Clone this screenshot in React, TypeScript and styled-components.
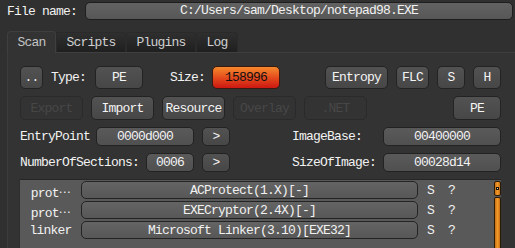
import React from "react";
import styled, { createGlobalStyle } from "styled-components";

const GlobalStyle = createGlobalStyle`
  html, body {
    margin: 0;
    padding: 0;
    background: #303030;
    overflow: hidden;
  }
  body {
    font-family: "Liberation Mono", "DejaVu Sans Mono", monospace;
    font-size: 13px;
    letter-spacing: -0.8px;
    color: #f2f2f2;
  }
`;

const Page = styled.div`
  width: 515px;
  height: 248px;
  overflow: hidden;
  display: flex;
  flex-direction: column;
`;

const FileRow = styled.div`
  display: flex;
  align-items: center;
  gap: 8px;
  height: 18px;
  margin: 2px 2px 0 7px;
`;

const FileInput = styled.div`
  flex: 1;
  height: 16px;
  line-height: 16px;
  text-align: center;
  background: linear-gradient(#626262, #575757);
  border: 1px solid #1e1e1e;
  border-radius: 5px;
`;

const TabBar = styled.div`
  display: flex;
  align-items: flex-end;
  height: 22px;
  margin: 10px 0 0 7px;
  position: relative;
  z-index: 1;
`;

const Tab = styled.div<{ $w: number; $active?: boolean }>`
  width: ${p => p.$w}px;
  height: ${p => (p.$active ? 22 : 20)}px;
  line-height: ${p => (p.$active ? 22 : 20)}px;
  box-sizing: border-box;
  text-align: center;
  color: ${p => (p.$active ? "#c4c4c4" : "#d0d0d0")};
  background: ${p => (p.$active ? "#333333" : "linear-gradient(#2f2f2f, #1f1f1f)")};
  border: 1px solid ${p => (p.$active ? "#3f3f3f" : "#2a2a2a")};
  border-bottom: none;
  border-radius: ${p => (p.$active ? "4px 4px 0 0" : "0 4px 0 0")};
  margin-bottom: ${p => (p.$active ? -1 : 0)}px;
`;

const Panel = styled.div`
  flex: 1;
  margin-left: 7px;
  background: #333333;
  border-left: 1px solid #3c3c3c;
  border-top: 1px solid #3f3f3f;
  padding: 13px 14px 0 12px;
  display: flex;
  flex-direction: column;
  gap: 7px;
  min-height: 0;
`;

const Row = styled.div<{ $h: number }>`
  display: flex;
  align-items: center;
  height: ${p => p.$h}px;
`;

const Spacer = styled.div`
  flex: 1;
`;

const Label = styled.span<{ $ml?: number }>`
  margin-left: ${p => p.$ml || 0}px;
  white-space: nowrap;
`;

const Button = styled.div<{ $w: number; $ml?: number; $disabled?: boolean }>`
  width: ${p => p.$w}px;
  height: 100%;
  box-sizing: border-box;
  margin-left: ${p => p.$ml || 0}px;
  display: flex;
  align-items: center;
  justify-content: center;
  border-radius: 5px;
  border: 1px solid ${p => (p.$disabled ? "#2a2a2a" : "#232323")};
  background: ${p => (p.$disabled ? "#333333" : "linear-gradient(#525252, #474747)")};
  color: ${p => (p.$disabled ? "#474747" : "#f4f4f4")};
`;

const SizeBox = styled.div`
  width: 68px;
  height: 100%;
  box-sizing: border-box;
  margin-left: 7px;
  display: flex;
  align-items: center;
  justify-content: center;
  border-radius: 5px;
  border: 1px solid #3a1a10;
  background: linear-gradient(#f68a2c, #e2461c 55%, #cc1812);
  color: #111111;
`;

const LeftGroup = styled.div`
  width: 210px;
  height: 100%;
  display: flex;
  align-items: center;
`;

const RightGroup = styled.div`
  flex: 1;
  height: 100%;
  margin-left: 62px;
  display: flex;
  align-items: center;
`;

const ValueBox = styled.div<{ $w: number }>`
  width: ${p => p.$w}px;
  height: 100%;
  box-sizing: border-box;
  display: flex;
  align-items: center;
  justify-content: center;
  border-radius: 5px;
  border: 1px solid #222222;
  background: linear-gradient(#5a5a5a, #505050);
`;

const List = styled.div`
  flex: 1;
  display: flex;
  background: #595959;
  border-top: 1px solid #262626;
  border-left: 1px solid #2e2e2e;
  margin-left: -1px;
  min-height: 0;
`;

const ListRows = styled.div`
  flex: 1;
  display: flex;
  flex-direction: column;
  gap: 2px;
  padding-top: 1px;
`;

const ListRow = styled.div`
  display: flex;
  align-items: center;
  height: 18px;
`;

const RowLabel = styled.div`
  width: 61px;
  text-align: center;
  white-space: nowrap;
`;

const Dots = styled.span`
  font-family: "Noto Sans CJK SC", sans-serif;
  letter-spacing: 0;
  font-size: 11px;
  vertical-align: 4px;
`;

const RowBox = styled.div`
  width: 337px;
  height: 100%;
  box-sizing: border-box;
  display: flex;
  align-items: center;
  justify-content: center;
  border-radius: 5px;
  border: 1px solid #242424;
  background: linear-gradient(#646464, #575757);
  white-space: nowrap;
`;

const Flag = styled.span<{ $ml: number }>`
  margin-left: ${p => p.$ml}px;
`;

const Scrollbar = styled.div`
  width: 7px;
  padding-top: 1px;
  display: flex;
  flex-direction: column;
  gap: 1px;
`;

const ScrollHandle = styled.div`
  height: 15px;
  box-sizing: border-box;
  border: 1px solid #2a1a08;
  border-radius: 2px;
  background: linear-gradient(90deg, #c86e12, #f29a2a, #c86e12);
  display: flex;
  align-items: center;
  justify-content: center;
`;

const HandleDot = styled.div`
  width: 1px;
  height: 1px;
  background: #f6d8a0;
  border: 1px solid #111;
`;

const ScrollTrack = styled.div`
  flex: 1;
  box-sizing: border-box;
  border: 1px solid #2a1a08;
  border-bottom: none;
  border-radius: 2px 2px 0 0;
  background: linear-gradient(90deg, #c86e12, #f29a2a, #c86e12);
`;

const rows = [
  { type: "prot", cut: true, name: "ACProtect(1.X)[-]" },
  { type: "prot", cut: true, name: "EXECryptor(2.4X)[-]" },
  { type: "linker", cut: false, name: "Microsoft Linker(3.10)[EXE32]" },
];

export default function App() {
  return (
    <Page>
      <GlobalStyle />
      <FileRow>
        <Label>File name:</Label>
        <FileInput>C:/Users/sam/Desktop/notepad98.EXE</FileInput>
      </FileRow>
      <TabBar>
        <Tab $w={49} $active>Scan</Tab>
        <Tab $w={70}>Scripts</Tab>
        <Tab $w={70}>Plugins</Tab>
        <Tab $w={42}>Log</Tab>
      </TabBar>
      <Panel>
        <Row $h={23}>
          <Button $w={23}>..</Button>
          <Label $ml={8}>Type:</Label>
          <Button $w={48} $ml={9}>PE</Button>
          <Label $ml={27}>Size:</Label>
          <SizeBox>158996</SizeBox>
          <Spacer />
          <Button $w={63}>Entropy</Button>
          <Button $w={33} $ml={8}>FLC</Button>
          <Button $w={28} $ml={8}>S</Button>
          <Button $w={28} $ml={8}>H</Button>
        </Row>
        <Row $h={24}>
          <Button $w={63} $disabled>Export</Button>
          <Button $w={63} $ml={8}>Import</Button>
          <Button $w={63} $ml={8}>Resource</Button>
          <Button $w={63} $ml={8} $disabled>Overlay</Button>
          <Button $w={63} $ml={8} $disabled>.NET</Button>
          <Spacer />
          <Button $w={48}>PE</Button>
        </Row>
        <Row $h={19}>
          <LeftGroup>
            <Label>EntryPoint</Label>
            <Spacer />
            <ValueBox $w={98}>0000d000</ValueBox>
            <Button $w={28} $ml={8}>&gt;</Button>
          </LeftGroup>
          <RightGroup>
            <Label>ImageBase:</Label>
            <Spacer />
            <ValueBox $w={118}>00400000</ValueBox>
          </RightGroup>
        </Row>
        <Row $h={19}>
          <LeftGroup>
            <Label>NumberOfSections:</Label>
            <Spacer />
            <ValueBox $w={48}>0006</ValueBox>
            <Button $w={28} $ml={8}>&gt;</Button>
          </LeftGroup>
          <RightGroup>
            <Label>SizeOfImage:</Label>
            <Spacer />
            <ValueBox $w={118}>00028d14</ValueBox>
          </RightGroup>
        </Row>
        <List>
          <ListRows>
            {rows.map((r, i) => (
              <ListRow key={i}>
                <RowLabel>
                  {r.type}
                  {r.cut && <Dots>…</Dots>}
                </RowLabel>
                <RowBox>{r.name}</RowBox>
                <Flag $ml={9}>S</Flag>
                <Flag $ml={14}>?</Flag>
              </ListRow>
            ))}
          </ListRows>
          <Scrollbar>
            <ScrollHandle>
              <HandleDot />
            </ScrollHandle>
            <ScrollTrack />
          </Scrollbar>
        </List>
      </Panel>
    </Page>
  );
}
